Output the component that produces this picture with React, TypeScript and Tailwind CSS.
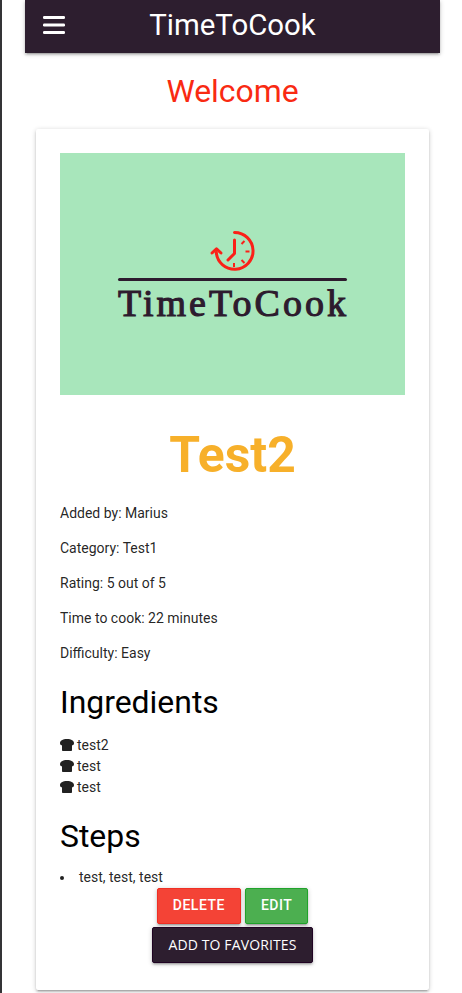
import React from "react";

const details = [
  "Added by: Marius",
  "Category: Test1",
  "Rating: 5 out of 5",
  "Time to cook: 22 minutes",
  "Difficulty: Easy",
];
const ingredients = ["test2", "test", "test"];

const raised =
  "shadow-[0_2px_2px_0_rgba(0,0,0,0.14),0_3px_1px_-2px_rgba(0,0,0,0.12),0_1px_5px_0_rgba(0,0,0,0.2)]";

function Logo() {
  return (
    <svg viewBox="0 0 345 242" className="block h-[242px] w-[345px] bg-[#a8e6bb]">
      <g fill="none" stroke="#fb2018" strokeLinecap="round" strokeLinejoin="round">
        <path strokeWidth="3" d="M174.500 79.500a18.400 18.400 0 1 1-18.200 20" />
        <path strokeWidth="3" d="M174.500 87v13.500l-6.500 6.500" />
        <path
          strokeWidth="2"
          strokeLinecap="butt"
          d="M181.500 91l3-3M185.500 98.500h4M181.500 107l3 3M174 110v4"
        />
        <path strokeWidth="3" d="M152 100l4.500-4.200 4.500 4.200" />
      </g>
      <rect x="58" y="125" width="229" height="3" rx="1.500" fill="#2d1b2e" />
      <text
        x="58"
        y="162.500"
        textLength="228"
        lengthAdjust="spacing"
        className="font-['Liberation_Serif',serif] text-[38px]"
        fill="#2d1b2e"
        stroke="#2d1b2e"
        strokeWidth="1.100"
      >
        TimeToCook
      </text>
    </svg>
  );
}

function Bars() {
  return (
    <svg viewBox="0 0 22 20" className="mb-[3px] ml-[18px] h-5 w-[22px]" fill="currentColor">
      <rect y="1" width="22" height="3" rx="1.200" />
      <rect y="8.500" width="22" height="3" rx="1.200" />
      <rect y="16" width="22" height="3" rx="1.200" />
    </svg>
  );
}

function Bread() {
  return (
    <svg viewBox="0 0 14 12" className="mb-px h-3 w-[14px]" fill="currentColor">
      <path d="M7 0C2.500 0 0 1.800 0 4.200C0 5.500 .9 6.300 2 6.300V11.200Q2 12 2.800 12H11.200Q12 12 12 11.200V6.300C13.100 6.300 14 5.500 14 4.200C14 1.800 11.500 0 7 0Z" />
    </svg>
  );
}

export default function App() {
  return (
    <div className="h-[993px] w-[462px] overflow-hidden border-l-2 border-[#343436] bg-white pr-[22px] pl-[23px] font-[Roboto,sans-serif] text-sm leading-[21px] text-black/87">
      <nav className={`grid h-[53px] grid-cols-[57px_1fr_57px] items-center bg-[#2d1e2f] text-white ${raised}`}>
        <Bars />
        <span className="pb-1 text-center text-[29.4px] leading-9">TimeToCook</span>
      </nav>

      <h4 className="mt-[21px] text-center text-[31.9px] leading-[35px] text-[#f92a12]">Welcome</h4>

      <main className={`mx-[11px] mt-5 h-[861px] rounded-[2px] bg-white p-6 ${raised}`}>
        <Logo />
        <h2 className="mt-[33px] text-center text-[49.8px] leading-[55px] font-bold text-[#f7b02a]">Test2</h2>
        <div className="mt-5 flex flex-col gap-[14px]">
          {details.map((line) => (
            <p key={line}>{line}</p>
          ))}
        </div>
        <h4 className="mt-[21px] text-[31.9px] leading-[35px] text-black">Ingredients</h4>
        <ul className="mt-[15px]">
          {ingredients.map((name, i) => (
            <li key={i} className="flex items-center gap-[3px]">
              <Bread />
              {name}
            </li>
          ))}
        </ul>
        <h4 className="mt-[21px] text-[31.9px] leading-[35px] text-black">Steps</h4>
        <ul className="mt-[13px] list-inside list-disc">
          <li>test, test, test</li>
        </ul>
        <div className="flex flex-col items-center gap-[3px]">
          <div className="flex gap-1">
            <button className={`h-9 rounded-[2px] border border-[#ef2f24] bg-[#f44336] px-[15px] pb-[2px] font-medium tracking-[0.5px] text-white ${raised}`}>
              DELETE
            </button>
            <button className={`h-9 rounded-[2px] border border-[#20a32b] bg-[#4caf50] px-[15px] pb-[2px] font-medium tracking-[0.5px] text-white ${raised}`}>
              EDIT
            </button>
          </div>
          <button className={`h-9 w-[161px] rounded-[2px] border border-[#200323] bg-[#2d1e2f] pb-[2px] font-['Open_Sans',sans-serif] tracking-[0.13px] text-white ${raised}`}>
            ADD TO FAVORITES
          </button>
        </div>
      </main>
    </div>
  );
}
